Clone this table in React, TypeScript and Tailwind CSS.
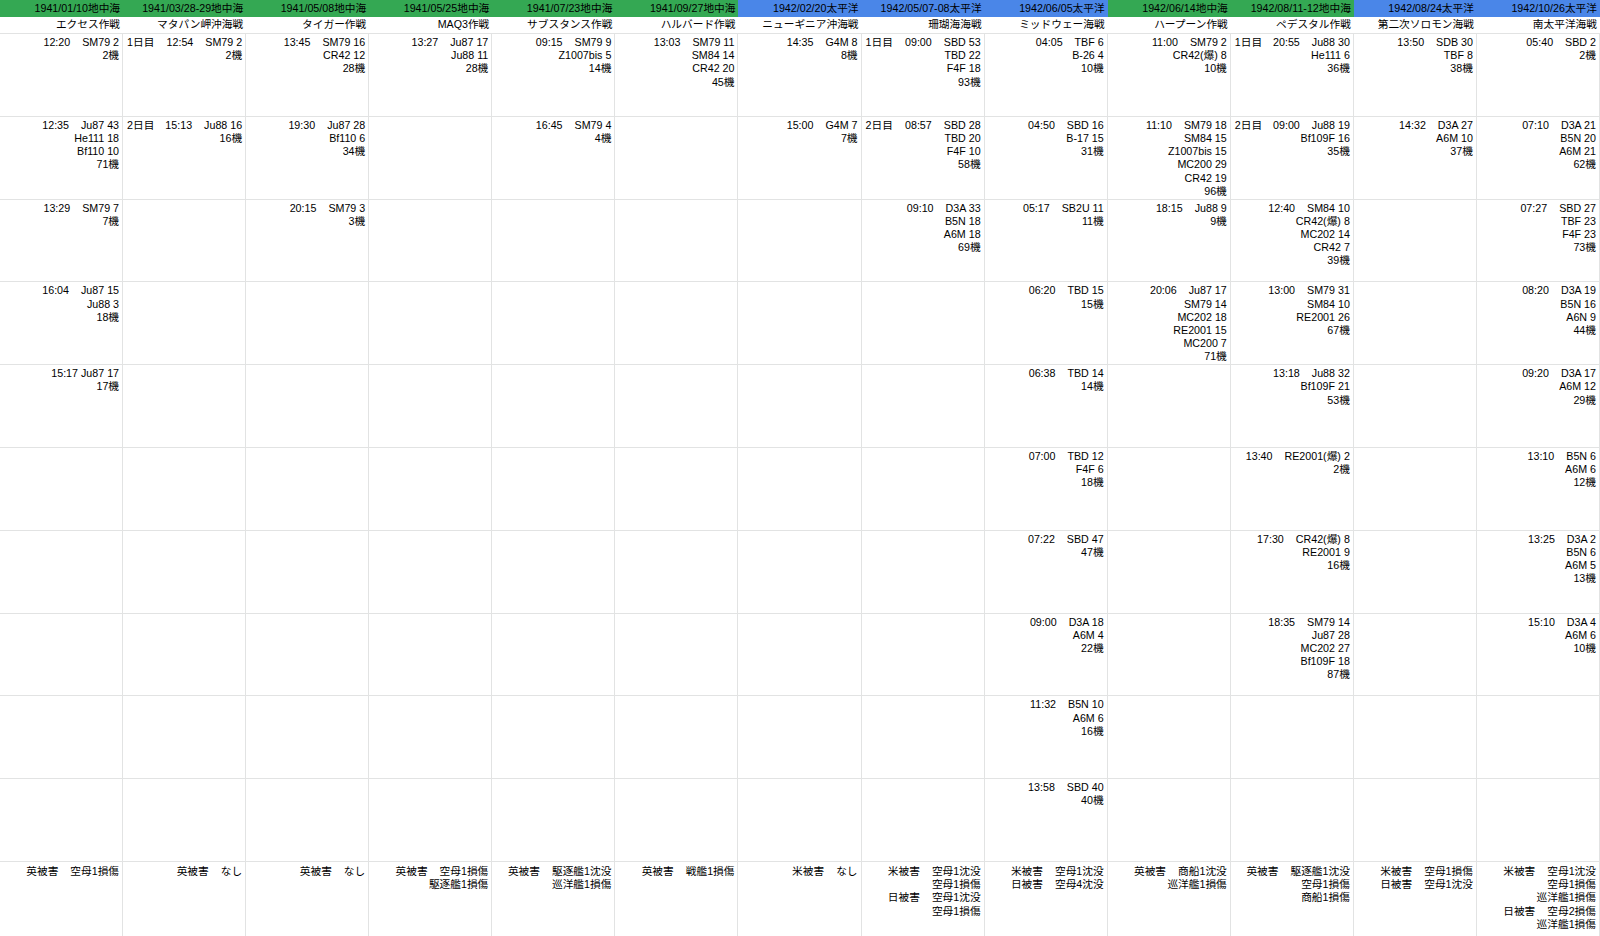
import React from "react";

type Sortie = {
  day?: string;
  time: string;
  planes: string[];
  total: string;
  tight?: boolean;
};

type Loss = { side: string; items: string[] };

type Battle = {
  date: string;
  sea: "med" | "pac";
  name: string;
  sorties: Sortie[];
  losses: Loss[];
};

const battles: Battle[] = [
  {
    date: "1941/01/10地中海",
    sea: "med",
    name: "エクセス作戦",
    sorties: [
      { time: "12:20", planes: ["SM79 2"], total: "2機" },
      { time: "12:35", planes: ["Ju87 43", "He111 18", "Bf110 10"], total: "71機" },
      { time: "13:29", planes: ["SM79 7"], total: "7機" },
      { time: "16:04", planes: ["Ju87 15", "Ju88 3"], total: "18機" },
      { time: "15:17", planes: ["Ju87 17"], total: "17機", tight: true },
    ],
    losses: [{ side: "英被害", items: ["空母1損傷"] }],
  },
  {
    date: "1941/03/28-29地中海",
    sea: "med",
    name: "マタパン岬沖海戦",
    sorties: [
      { day: "1日目", time: "12:54", planes: ["SM79 2"], total: "2機" },
      { day: "2日目", time: "15:13", planes: ["Ju88 16"], total: "16機" },
    ],
    losses: [{ side: "英被害", items: ["なし"] }],
  },
  {
    date: "1941/05/08地中海",
    sea: "med",
    name: "タイガー作戦",
    sorties: [
      { time: "13:45", planes: ["SM79 16", "CR42 12"], total: "28機" },
      { time: "19:30", planes: ["Ju87 28", "Bf110 6"], total: "34機" },
      { time: "20:15", planes: ["SM79 3"], total: "3機" },
    ],
    losses: [{ side: "英被害", items: ["なし"] }],
  },
  {
    date: "1941/05/25地中海",
    sea: "med",
    name: "MAQ3作戦",
    sorties: [{ time: "13:27", planes: ["Ju87 17", "Ju88 11"], total: "28機" }],
    losses: [{ side: "英被害", items: ["空母1損傷", "駆逐艦1損傷"] }],
  },
  {
    date: "1941/07/23地中海",
    sea: "med",
    name: "サブスタンス作戦",
    sorties: [
      { time: "09:15", planes: ["SM79 9", "Z1007bis 5"], total: "14機" },
      { time: "16:45", planes: ["SM79 4"], total: "4機" },
    ],
    losses: [{ side: "英被害", items: ["駆逐艦1沈没", "巡洋艦1損傷"] }],
  },
  {
    date: "1941/09/27地中海",
    sea: "med",
    name: "ハルバード作戦",
    sorties: [{ time: "13:03", planes: ["SM79 11", "SM84 14", "CR42 20"], total: "45機" }],
    losses: [{ side: "英被害", items: ["戦艦1損傷"] }],
  },
  {
    date: "1942/02/20太平洋",
    sea: "pac",
    name: "ニューギニア沖海戦",
    sorties: [
      { time: "14:35", planes: ["G4M 8"], total: "8機" },
      { time: "15:00", planes: ["G4M 7"], total: "7機" },
    ],
    losses: [{ side: "米被害", items: ["なし"] }],
  },
  {
    date: "1942/05/07-08太平洋",
    sea: "pac",
    name: "珊瑚海海戦",
    sorties: [
      { day: "1日目", time: "09:00", planes: ["SBD 53", "TBD 22", "F4F 18"], total: "93機" },
      { day: "2日目", time: "08:57", planes: ["SBD 28", "TBD 20", "F4F 10"], total: "58機" },
      { time: "09:10", planes: ["D3A 33", "B5N 18", "A6M 18"], total: "69機" },
    ],
    losses: [
      { side: "米被害", items: ["空母1沈没", "空母1損傷"] },
      { side: "日被害", items: ["空母1沈没", "空母1損傷"] },
    ],
  },
  {
    date: "1942/06/05太平洋",
    sea: "pac",
    name: "ミッドウェー海戦",
    sorties: [
      { time: "04:05", planes: ["TBF 6", "B-26 4"], total: "10機" },
      { time: "04:50", planes: ["SBD 16", "B-17 15"], total: "31機" },
      { time: "05:17", planes: ["SB2U 11"], total: "11機" },
      { time: "06:20", planes: ["TBD 15"], total: "15機" },
      { time: "06:38", planes: ["TBD 14"], total: "14機" },
      { time: "07:00", planes: ["TBD 12", "F4F 6"], total: "18機" },
      { time: "07:22", planes: ["SBD 47"], total: "47機" },
      { time: "09:00", planes: ["D3A 18", "A6M 4"], total: "22機" },
      { time: "11:32", planes: ["B5N 10", "A6M 6"], total: "16機" },
      { time: "13:58", planes: ["SBD 40"], total: "40機" },
    ],
    losses: [
      { side: "米被害", items: ["空母1沈没"] },
      { side: "日被害", items: ["空母4沈没"] },
    ],
  },
  {
    date: "1942/06/14地中海",
    sea: "med",
    name: "ハープーン作戦",
    sorties: [
      { time: "11:00", planes: ["SM79 2", "CR42(爆) 8"], total: "10機" },
      { time: "11:10", planes: ["SM79 18", "SM84 15", "Z1007bis 15", "MC200 29", "CR42 19"], total: "96機" },
      { time: "18:15", planes: ["Ju88 9"], total: "9機" },
      { time: "20:06", planes: ["Ju87 17", "SM79 14", "MC202 18", "RE2001 15", "MC200 7"], total: "71機" },
    ],
    losses: [{ side: "英被害", items: ["商船1沈没", "巡洋艦1損傷"] }],
  },
  {
    date: "1942/08/11-12地中海",
    sea: "med",
    name: "ペデスタル作戦",
    sorties: [
      { day: "1日目", time: "20:55", planes: ["Ju88 30", "He111 6"], total: "36機" },
      { day: "2日目", time: "09:00", planes: ["Ju88 19", "Bf109F 16"], total: "35機" },
      { time: "12:40", planes: ["SM84 10", "CR42(爆) 8", "MC202 14", "CR42 7"], total: "39機" },
      { time: "13:00", planes: ["SM79 31", "SM84 10", "RE2001 26"], total: "67機" },
      { time: "13:18", planes: ["Ju88 32", "Bf109F 21"], total: "53機" },
      { time: "13:40", planes: ["RE2001(爆) 2"], total: "2機" },
      { time: "17:30", planes: ["CR42(爆) 8", "RE2001 9"], total: "16機" },
      { time: "18:35", planes: ["SM79 14", "Ju87 28", "MC202 27", "Bf109F 18"], total: "87機" },
    ],
    losses: [{ side: "英被害", items: ["駆逐艦1沈没", "空母1損傷", "商船1損傷"] }],
  },
  {
    date: "1942/08/24太平洋",
    sea: "pac",
    name: "第二次ソロモン海戦",
    sorties: [
      { time: "13:50", planes: ["SDB 30", "TBF 8"], total: "38機" },
      { time: "14:32", planes: ["D3A 27", "A6M 10"], total: "37機" },
    ],
    losses: [
      { side: "米被害", items: ["空母1損傷"] },
      { side: "日被害", items: ["空母1沈没"] },
    ],
  },
  {
    date: "1942/10/26太平洋",
    sea: "pac",
    name: "南太平洋海戦",
    sorties: [
      { time: "05:40", planes: ["SBD 2"], total: "2機" },
      { time: "07:10", planes: ["D3A 21", "B5N 20", "A6M 21"], total: "62機" },
      { time: "07:27", planes: ["SBD 27", "TBF 23", "F4F 23"], total: "73機" },
      { time: "08:20", planes: ["D3A 19", "B5N 16", "A6N 9"], total: "44機" },
      { time: "09:20", planes: ["D3A 17", "A6M 12"], total: "29機" },
      { time: "13:10", planes: ["B5N 6", "A6M 6"], total: "12機" },
      { time: "13:25", planes: ["D3A 2", "B5N 6", "A6M 5"], total: "13機" },
      { time: "15:10", planes: ["D3A 4", "A6M 6"], total: "10機" },
    ],
    losses: [
      { side: "米被害", items: ["空母1沈没", "空母1損傷", "巡洋艦1損傷"] },
      { side: "日被害", items: ["空母2損傷", "巡洋艦1損傷"] },
    ],
  },
];

const ROWS = 10;

function SortieCell({ sortie }: { sortie?: Sortie }) {
  return (
    <div className="border-r border-b border-[#e2e3e3] px-[3px] pt-[2px] text-right overflow-hidden">
      {sortie && (
        <>
          <div className="flex items-baseline">
            {sortie.day && <span className="pl-px">{sortie.day}</span>}
            <span className="ml-auto">{sortie.time}</span>
            <span className={sortie.tight ? "ml-[3px]" : "ml-3"}>{sortie.planes[0]}</span>
          </div>
          {sortie.planes.slice(1).map((p, i) => (
            <div key={i}>{p}</div>
          ))}
          <div>{sortie.total}</div>
        </>
      )}
    </div>
  );
}

function LossCell({ losses }: { losses: Loss[] }) {
  return (
    <div className="border-r border-[#e2e3e3] px-[3px] pt-[3px] text-right">
      {losses.map((loss) => (
        <div key={loss.side}>
          <div className="flex justify-end">
            <span>{loss.side}</span>
            <span className="ml-3">{loss.items[0]}</span>
          </div>
          {loss.items.slice(1).map((item, i) => (
            <div key={i}>{item}</div>
          ))}
        </div>
      ))}
    </div>
  );
}

export default function App() {
  return (
    <div
      className="h-[936px] w-[1600px] overflow-hidden bg-white text-black text-[10.7px] leading-[13.2px]"
      style={{ fontFamily: '"Liberation Sans", Arial, "Noto Sans CJK JP", sans-serif' }}
    >
      <div className="grid grid-cols-[repeat(13,minmax(0,1fr))] grid-rows-[17px_17px_repeat(10,82.8px)_120px]">
        {battles.map((b) => (
          <div
            key={b.date}
            className={`flex items-center justify-end px-[3px] ${b.sea === "med" ? "bg-[#34a853]" : "bg-[#4a86e8]"}`}
          >
            {b.date}
          </div>
        ))}
        {battles.map((b) => (
          <div key={b.name} className="flex items-center justify-end border-b border-[#e2e3e3] px-[3px]">
            {b.name}
          </div>
        ))}
        {Array.from({ length: ROWS }).map((_, r) =>
          battles.map((b) => <SortieCell key={`${r}-${b.date}`} sortie={b.sorties[r]} />)
        )}
        {battles.map((b) => (
          <LossCell key={`loss-${b.date}`} losses={b.losses} />
        ))}
      </div>
    </div>
  );
}
